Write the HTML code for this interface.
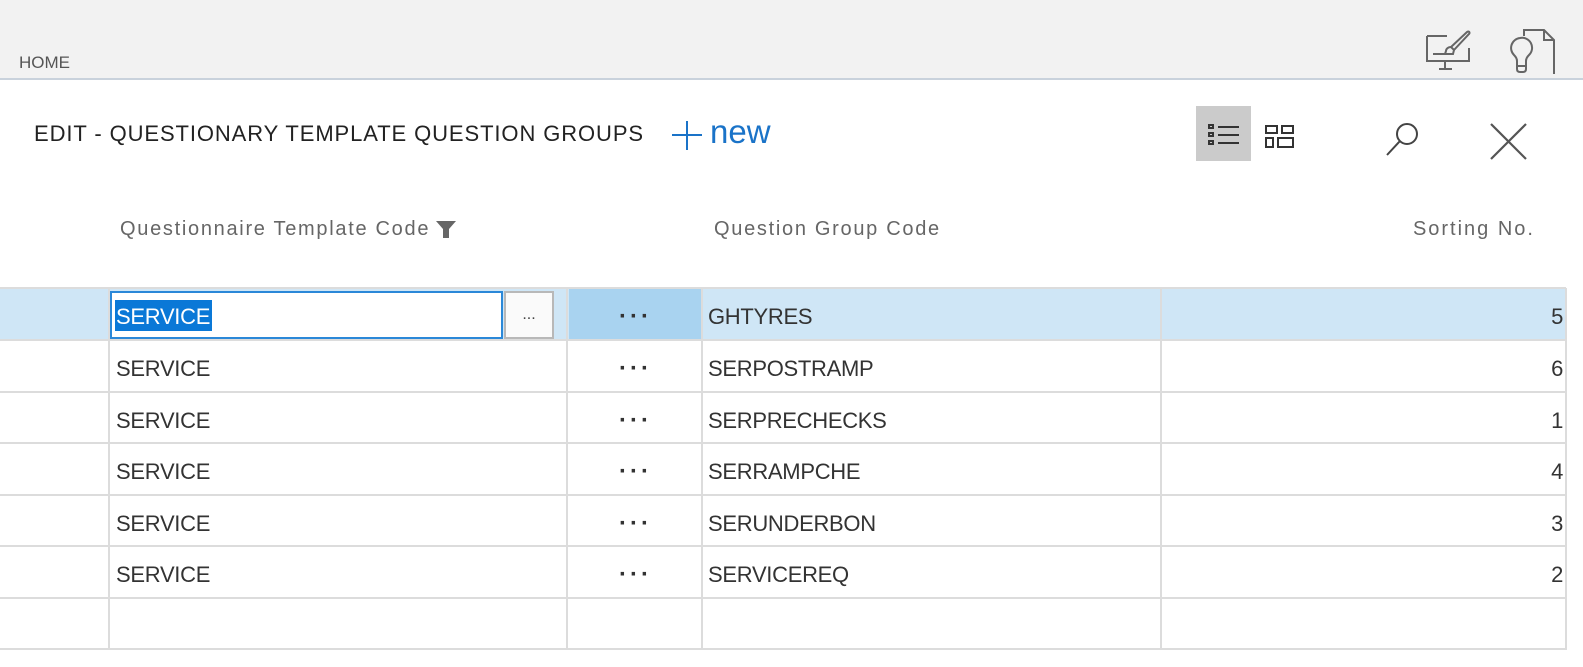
<!DOCTYPE html>
<html><head><meta charset="utf-8"><style>
*{margin:0;padding:0;box-sizing:border-box}
body{width:1583px;height:667px;background:#fff;font-family:"Liberation Sans",sans-serif;position:relative;overflow:hidden;color:#333}
.a{position:absolute;white-space:nowrap}
.hdr{left:0;top:0;width:1583px;height:80px;background:#f2f2f2;border-bottom:2px solid #c9d2dc}
.hl{position:absolute;left:0;width:1566px;height:2px;background:#dcdcdc}
.vl{position:absolute;width:2px;background:#dcdcdc;top:288px;height:362px}
.cell{font-size:22px;color:#333;letter-spacing:-0.3px}
.dots{font-size:24px;color:#333;letter-spacing:3px;font-weight:bold}
.ch{font-size:20px;color:#666;top:218px;letter-spacing:1.7px}
</style></head><body>
<div class="a hdr"></div>
<div class="a" style="left:19px;top:53px;font-size:17px;color:#555">HOME</div>
<svg class="a" style="left:1425px;top:28px" width="48" height="44" viewBox="0 0 48 44" fill="none" stroke="#666" stroke-width="2">
<path d="M2 8h20M2 8v25h42V20M2 33"/><path d="M20 34v7M14 41h13"/><path d="M42 4c1.5-1.5 3.5.5 2 2L29 22l-3-3z"/><path d="M26 19c-3 0-5 2-5 4l-1 3h8l1-4"/><path d="M8 26h13"/>
</svg>
<svg class="a" style="left:1508px;top:28px" width="48" height="46" viewBox="0 0 48 46" fill="none" stroke="#666" stroke-width="2">
<path d="M16 8V2h20l10 10v36H30"/><path d="M36 2v10h10"/><path d="M12 10a10 10 0 0 0-6 17c2 2 3 4 3 6v8c0 2 1 3 3 3h3c2 0 3-1 3-3v-8c0-2 1-4 3-6a10 10 0 0 0-9-17z"/><path d="M10 38h9"/>
</svg>
<div class="a" style="left:34px;top:121px;font-size:22px;color:#222;letter-spacing:0.9px">EDIT - QUESTIONARY TEMPLATE QUESTION GROUPS</div>
<svg class="a" style="left:671px;top:119px" width="32" height="32"><path d="M16 2v29M1 16h30" stroke="#1a73c8" stroke-width="2"/></svg>
<div class="a" style="left:710px;top:113px;font-size:33px;color:#1a73c8">new</div>
<div class="a" style="left:1196px;top:106px;width:55px;height:55px;background:#cbcbcb"></div>
<svg class="a" style="left:1208px;top:124px" width="32" height="24" fill="none" stroke="#333" stroke-width="2">
<rect x="1" y="1" width="4" height="3"/><rect x="1" y="9" width="4" height="3"/><rect x="1" y="17" width="4" height="3"/><path d="M10 3h21M10 11h21M10 19h21"/></svg>
<svg class="a" style="left:1265px;top:125px" width="30" height="24" fill="none" stroke="#333" stroke-width="2">
<rect x="1" y="1" width="11" height="7"/><rect x="17" y="1" width="11" height="7"/><rect x="1" y="13" width="7" height="9"/><rect x="13" y="13" width="15" height="9"/></svg>
<svg class="a" style="left:1385px;top:120px" width="38" height="38" fill="none" stroke="#444" stroke-width="2"><circle cx="22" cy="14" r="10"/><path d="M15 21L2 35"/></svg>
<svg class="a" style="left:1489px;top:122px" width="40" height="38" fill="none" stroke="#555" stroke-width="2.2"><path d="M2 2l35 35M37 2L2 37"/></svg>
<div class="a ch" style="left:120px">Questionnaire Template Code</div>
<svg class="a" style="left:435px;top:220px" width="22" height="18"><path d="M1 1h20l-7 8v9h-6V9z" fill="#666"/></svg>
<div class="a ch" style="left:714px">Question Group Code</div>
<div class="a ch" style="right:48px;letter-spacing:2px">Sorting No.</div>
<div class="a" style="left:0;top:289px;width:1566px;height:51px;background:#cfe6f6"></div>
<div class="a" style="left:569px;top:289px;width:132px;height:51px;background:#a9d3f0"></div>
<div class="a" style="left:110px;top:291px;width:393px;height:48px;background:#fff;border:2px solid #2b88d8"></div>
<div class="a" style="left:115px;top:300px;width:97px;height:31px;background:#0a78d7"></div>
<div class="a cell" style="left:116px;top:304px;color:#fff">SERVICE</div>
<div class="a" style="left:504px;top:291px;width:50px;height:48px;background:#fafafa;border:2px solid #b8b8b8;font-size:16px;text-align:center;line-height:44px;color:#444">...</div>
<div class="hl" style="top:287px"></div><div class="hl" style="top:339px"></div><div class="hl" style="top:391px"></div><div class="hl" style="top:442px"></div><div class="hl" style="top:494px"></div><div class="hl" style="top:545px"></div><div class="hl" style="top:597px"></div><div class="hl" style="top:648px"></div>
<div class="vl" style="left:108px"></div><div class="vl" style="left:566px"></div><div class="vl" style="left:701px"></div><div class="vl" style="left:1160px"></div><div class="vl" style="left:1565px"></div>
<div class="a dots" style="left:619px;top:303px">···</div>
<div class="a cell" style="left:708px;top:304px">GHTYRES</div>
<div class="a cell" style="right:20px;top:304px">5</div>
<div class="a cell" style="left:116px;top:356px">SERVICE</div><div class="a dots" style="left:619px;top:355px">···</div><div class="a cell" style="left:708px;top:356px">SERPOSTRAMP</div><div class="a cell" style="right:20px;top:356px">6</div>
<div class="a cell" style="left:116px;top:408px">SERVICE</div><div class="a dots" style="left:619px;top:407px">···</div><div class="a cell" style="left:708px;top:408px">SERPRECHECKS</div><div class="a cell" style="right:20px;top:408px">1</div>
<div class="a cell" style="left:116px;top:459px">SERVICE</div><div class="a dots" style="left:619px;top:458px">···</div><div class="a cell" style="left:708px;top:459px">SERRAMPCHE</div><div class="a cell" style="right:20px;top:459px">4</div>
<div class="a cell" style="left:116px;top:511px">SERVICE</div><div class="a dots" style="left:619px;top:510px">···</div><div class="a cell" style="left:708px;top:511px">SERUNDERBON</div><div class="a cell" style="right:20px;top:511px">3</div>
<div class="a cell" style="left:116px;top:562px">SERVICE</div><div class="a dots" style="left:619px;top:561px">···</div><div class="a cell" style="left:708px;top:562px">SERVICEREQ</div><div class="a cell" style="right:20px;top:562px">2</div>
</body></html>
